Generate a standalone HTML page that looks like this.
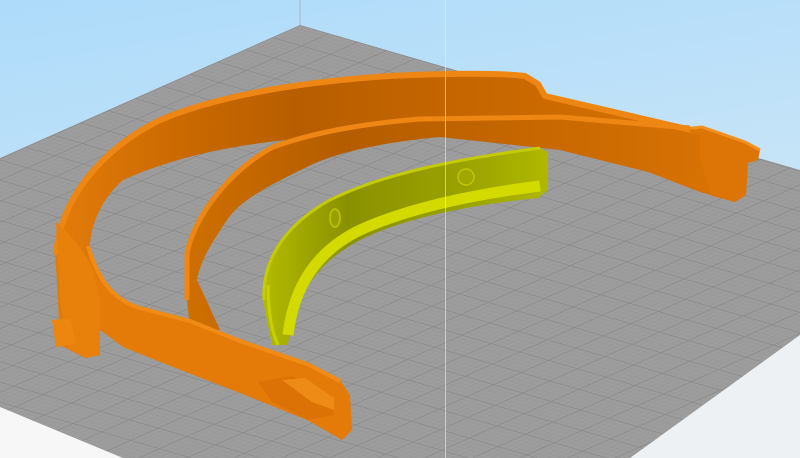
<!DOCTYPE html>
<html><head><meta charset="utf-8"><style>
html,body{margin:0;padding:0;width:800px;height:458px;overflow:hidden}
svg{display:block}
</style></head><body>
<svg width="800" height="458" viewBox="0 0 800 458" xmlns="http://www.w3.org/2000/svg">
<defs>
<linearGradient id="sky" x1="0" y1="0" x2="0.3" y2="1">
<stop offset="0" stop-color="#addbfa"/><stop offset="0.6" stop-color="#c6e4f8"/><stop offset="1" stop-color="#f4f6f8"/>
</linearGradient>
<pattern id="grid" patternUnits="userSpaceOnUse" width="1" height="1" patternTransform="matrix(28.8 8.4 -27.4 12.2 300 25)">
<rect width="1" height="1" fill="#9d9d9d"/>
<rect x="0.2" width="0.012" height="1" fill="#929292"/>
<rect x="0.4" width="0.012" height="1" fill="#929292"/>
<rect x="0.6" width="0.012" height="1" fill="#929292"/>
<rect x="0.8" width="0.012" height="1" fill="#929292"/>
<rect y="0.2" height="0.012" width="1" fill="#929292"/>
<rect y="0.4" height="0.012" width="1" fill="#929292"/>
<rect y="0.6" height="0.012" width="1" fill="#929292"/>
<rect y="0.8" height="0.012" width="1" fill="#929292"/>
<rect width="0.03" height="1" fill="#858585"/>
<rect height="0.03" width="1" fill="#858585"/>
</pattern>
<linearGradient id="og" gradientUnits="userSpaceOnUse" x1="50" y1="0" x2="760" y2="0">
<stop offset="0" stop-color="#e47c0a"/><stop offset="0.2" stop-color="#c86800"/><stop offset="0.35" stop-color="#b85e00"/><stop offset="0.7" stop-color="#cc6a00"/><stop offset="1" stop-color="#dc7406"/>
</linearGradient>
<linearGradient id="ig" gradientUnits="userSpaceOnUse" x1="180" y1="0" x2="720" y2="0">
<stop offset="0" stop-color="#d07000"/><stop offset="0.3" stop-color="#b45c00"/><stop offset="0.6" stop-color="#c46600"/><stop offset="1" stop-color="#d87204"/>
</linearGradient>
<linearGradient id="yg" gradientUnits="userSpaceOnUse" x1="260" y1="0" x2="550" y2="0">
<stop offset="0" stop-color="#b4bc00"/><stop offset="0.3" stop-color="#8a9100"/><stop offset="0.7" stop-color="#9aa200"/><stop offset="1" stop-color="#b0b800"/>
</linearGradient>
</defs>
<rect width="800" height="458" fill="url(#sky)"/>
<polygon points="0,380 123,458 0,458" fill="#f7f7f7"/>
<polygon points="800,320 630,458 800,458" fill="#eef1f4"/>
<polygon points="300,25 0,158 0,407 123,458 630,458 800,335 800,170" fill="url(#grid)"/>
<line x1="300" y1="0" x2="300" y2="25" stroke="#a8b4bc" stroke-width="1"/>

<!-- outer band -->
<path d="M58,300 L55,250 C60,200 100,150 160,120 C220,95 300,82 390,76 C450,73 500,73 525,76 L538,84 L545,96 L745,145 L746,195 L735,202 L700,192 L540,130 L373,137 C300,135 200,145 123,180 C100,200 87,230 90,260 L100,300 L100,355 L85,358 L60,345 Z" fill="url(#og)"/>
<path d="M56,255 C60,200 100,150 160,120 C220,95 300,82 390,76 C450,73 500,73 525,76 L538,84 L545,96 L700,132" fill="none" stroke="#ee8614" stroke-width="6"/>
<!-- right end clip -->
<path d="M690,130 L702,127 L745,142 L760,150 L758,160 L748,163 L746,195 L735,202 L712,196 Z" fill="#dc7406"/>
<path d="M692,128 L702,127 L745,142 L760,150" fill="none" stroke="#f29020" stroke-width="3"/>
<!-- inner band -->
<path d="M187,300 L187,253 C195,215 230,170 273,147 C320,130 373,123 420,119 L560,117 L700,135 L700,185 L560,150 L440,137 C373,143 330,155 307,167 C270,185 240,200 227,220 C210,245 200,262 197,280 L220,330 L190,330 Z" fill="url(#ig)"/>
<path d="M187,300 L187,253 C195,215 230,170 273,147 C320,130 373,123 420,119 L560,117 L690,128" fill="none" stroke="#ee8614" stroke-width="5"/>
<!-- front strip -->
<path d="M86,240 C95,275 110,300 140,307 L190,320 L240,340 L307,363 L340,380 L350,395 L352,430 L342,440 L307,420 L240,393 L173,367 L123,347 L100,330 Z" fill="#e47b08"/>
<path d="M88,246 C97,277 112,300 140,308 L190,321 L240,341 L307,364 L340,381" fill="none" stroke="#f08c16" stroke-width="4"/>
<!-- left end outer face -->
<path d="M56,222 C70,235 84,250 92,268 L100,300 L100,355 L85,358 L68,348 L60,300 Z" fill="#e8800c"/>
<path d="M52,320 L70,318 L76,344 L56,347 Z" fill="#ec860e"/>
<!-- clip end -->
<path d="M258,382 L292,376 L330,395 L334,415 L308,420 L272,402 Z" fill="#dc7206"/>
<path d="M282,380 L305,378 L334,398 L334,410 L312,402 Z" fill="#ee8a16"/>

<!-- yellow piece -->
<path d="M263,300 C262,260 285,225 330,200 C380,175 450,160 540,148 L548,152 L548,190 L538,198 C460,206 400,220 360,240 C322,260 297,290 292,330 L287,345 L272,345 Z" fill="url(#yg)"/>
<path d="M540,186 C460,196 400,211 356,232 C318,252 294,284 288,335" fill="none" stroke="#d2da00" stroke-width="11"/>
<path d="M264,300 C262,260 285,225 330,200 C380,175 450,160 540,148" fill="none" stroke="#c4cc00" stroke-width="3"/>
<path d="M268,285 C268,315 273,335 278,345" fill="none" stroke="#c8d000" stroke-width="3"/>
<circle cx="466" cy="177" r="8" fill="#a0a800" stroke="#c0c800" stroke-width="1.5"/>
<ellipse cx="335" cy="218" rx="5" ry="9" fill="#98a000" stroke="#c0c800" stroke-width="1.5"/>

<line x1="445.5" y1="0" x2="445.5" y2="458" stroke="#e8eef2" stroke-opacity="0.6" stroke-width="1"/>
</svg>
</body></html>
